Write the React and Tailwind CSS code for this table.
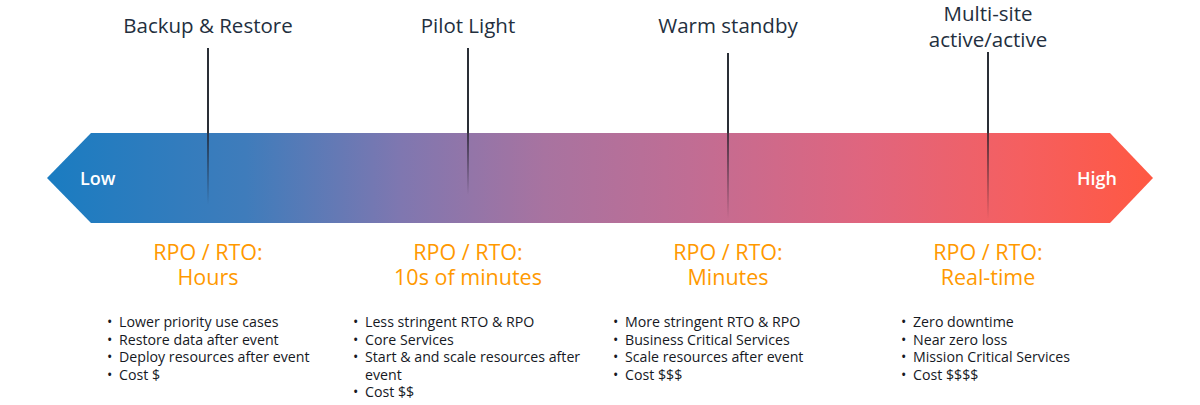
const stages = [
  {
    title: ["Backup & Restore"],
    lineTop: "mt-[10px]",
    bandLine: "h-[72px]",
    rto: "Hours",
    bullets: [
      ["Lower priority use cases"],
      ["Restore data after event"],
      ["Deploy resources after event"],
      ["Cost $"],
    ],
  },
  {
    title: ["Pilot Light"],
    lineTop: "mt-[10px]",
    bandLine: "h-[62px]",
    rto: "10s of minutes",
    bullets: [
      ["Less stringent RTO & RPO"],
      ["Core Services"],
      ["Start & and scale resources after", "event"],
      ["Cost $$"],
    ],
  },
  {
    title: ["Warm standby"],
    lineTop: "mt-[15px]",
    bandLine: "h-[86px]",
    rto: "Minutes",
    bullets: [
      ["More stringent RTO & RPO"],
      ["Business Critical Services"],
      ["Scale resources after event"],
      ["Cost $$$"],
    ],
  },
  {
    title: ["Multi-site", "active/active"],
    lineTop: "mt-[0px]",
    bandLine: "h-[86px]",
    rto: "Real-time",
    bullets: [
      ["Zero downtime"],
      ["Near zero loss"],
      ["Mission Critical Services"],
      ["Cost $$$$"],
    ],
  },
];

const bulletOffsets = ["pl-[29px]", "pl-[15px]", "pl-[15px]", "pl-[43px]"];

const App = () => {
  return (
    <div
      className="w-[1200px] h-[405px] bg-white overflow-hidden"
      style={{ fontFamily: '"Open Sans", "Noto Sans", sans-serif' }}
    >
      {/* titles + drop lines */}
      <div className="grid grid-cols-4 w-[1040px] ml-[78px] h-[133px]">
        {stages.map((s) => (
          <div key={s.title[0]} className="flex flex-col items-center">
            <div
              className={`text-[20.5px] leading-[26px] text-[#232f3e] text-center ${
                s.title.length > 1 ? "pt-0" : "pt-[12px]"
              }`}
            >
              {s.title.map((t) => (
                <div key={t}>{t}</div>
              ))}
            </div>
            <div className={`w-[2px] flex-1 bg-[#2a2f36] ${s.lineTop}`} />
          </div>
        ))}
      </div>

      {/* gradient band */}
      <div className="relative ml-[47px] w-[1106px] h-[90px]">
        <div
          className="absolute inset-0 bg-[linear-gradient(90deg,#1a7cc1_0%,#3f7cbb_18%,#7f77b0_32%,#a873a0_45%,#c06d94_58%,#e0657e_74%,#f55f60_88%,#ff5842_100%)] [clip-path:polygon(44px_0,1063px_0,1106px_45px,1063px_90px,44px_90px,0_45px)]"
        />
        <div className="absolute inset-0 flex items-center justify-between pl-[33px] pr-[36px] text-white text-[18px] font-semibold">
          <span>Low</span>
          <span>High</span>
        </div>
        <div className="absolute inset-y-0 left-[31px] w-[1040px] grid grid-cols-4">
          {stages.map((s) => (
            <div key={s.title[0]} className="flex justify-center">
              <div
                className={`w-[2px] ${s.bandLine} bg-[linear-gradient(180deg,rgba(30,30,40,0.75),rgba(30,30,40,0))]`}
              />
            </div>
          ))}
        </div>
      </div>

      {/* RPO / RTO + bullets */}
      <div className="grid grid-cols-4 w-[1040px] ml-[78px]">
        {stages.map((s, i) => (
          <div key={s.title[0]} className="flex flex-col">
            <div className="text-center text-[#ff9900] text-[21.5px] leading-[25px] pt-[16px]">
              <div>RPO / RTO:</div>
              <div>{s.rto}</div>
            </div>
            <ul className={`mt-[24px] text-[14.2px] leading-[17.6px] text-[#16191f] ${bulletOffsets[i]}`}>
              {s.bullets.map((b) => (
                <li key={b[0]} className="flex">
                  <span className="w-[12px] shrink-0">•</span>
                  <span>
                    {b.map((line, j) => (
                      <span key={j} className="block">
                        {line}
                      </span>
                    ))}
                  </span>
                </li>
              ))}
            </ul>
          </div>
        ))}
      </div>
    </div>
  );
};

export default App;
